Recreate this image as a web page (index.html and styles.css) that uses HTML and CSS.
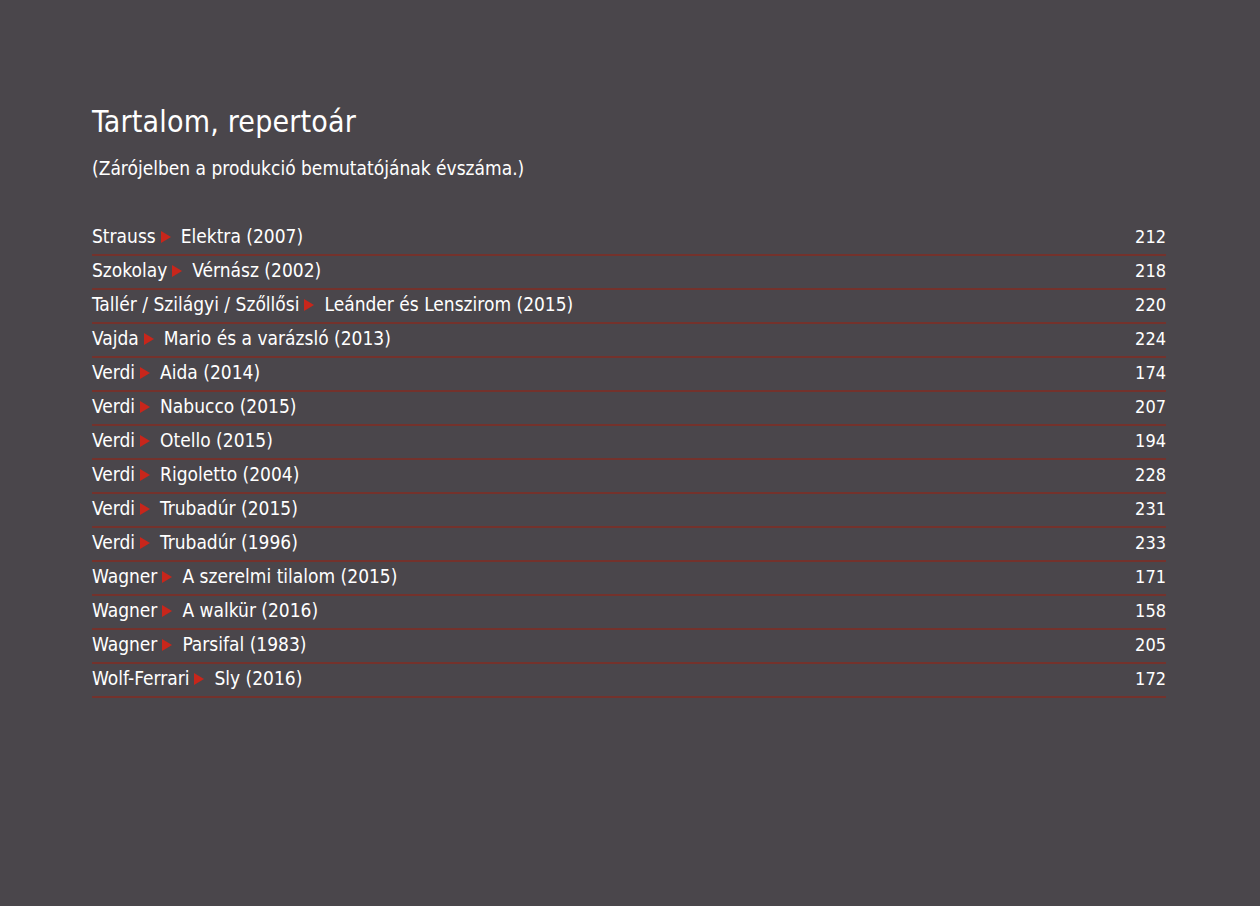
FILE: index.html
```html
<!DOCTYPE html>
<html lang="hu">
<head>
<meta charset="utf-8">
<link rel="stylesheet" href="styles.css">
</head>
<body>
<main class="page">
  <h1 class="title">Tartalom, repertoár</h1>
  <p class="subtitle">(Zárójelben a produkció bemutatójának évszáma.)</p>
  <ul class="toc">
    <li class="row"><span class="name">Strauss<span class="tri"></span>Elektra (2007)</span><span class="num">212</span></li>
    <li class="row"><span class="name">Szokolay<span class="tri"></span>Vérnász (2002)</span><span class="num">218</span></li>
    <li class="row"><span class="name">Tallér / Szilágyi / Szőllősi<span class="tri"></span>Leánder és Lenszirom (2015)</span><span class="num">220</span></li>
    <li class="row"><span class="name">Vajda<span class="tri"></span>Mario és a varázsló (2013)</span><span class="num">224</span></li>
    <li class="row"><span class="name">Verdi<span class="tri"></span>Aida (2014)</span><span class="num">174</span></li>
    <li class="row"><span class="name">Verdi<span class="tri"></span>Nabucco (2015)</span><span class="num">207</span></li>
    <li class="row"><span class="name">Verdi<span class="tri"></span>Otello (2015)</span><span class="num">194</span></li>
    <li class="row"><span class="name">Verdi<span class="tri"></span>Rigoletto (2004)</span><span class="num">228</span></li>
    <li class="row"><span class="name">Verdi<span class="tri"></span>Trubadúr (2015)</span><span class="num">231</span></li>
    <li class="row"><span class="name">Verdi<span class="tri"></span>Trubadúr (1996)</span><span class="num">233</span></li>
    <li class="row"><span class="name">Wagner<span class="tri"></span>A szerelmi tilalom (2015)</span><span class="num">171</span></li>
    <li class="row"><span class="name">Wagner<span class="tri"></span>A walkür (2016)</span><span class="num">158</span></li>
    <li class="row"><span class="name">Wagner<span class="tri"></span>Parsifal (1983)</span><span class="num">205</span></li>
    <li class="row"><span class="name">Wolf-Ferrari<span class="tri"></span>Sly (2016)</span><span class="num">172</span></li>
  </ul>
</main>
</body>
</html>
```
FILE: styles.css
```css
html, body {
  margin: 0;
  padding: 0;
  background: #4a464b;
}
body {
  width: 1260px;
  height: 906px;
  font-family: "DejaVu Sans Condensed", "Liberation Sans", sans-serif;
  color: #ffffff;
}
.page {
  padding: 102px 94px 0 92px;
}
.title {
  margin: 0;
  font-weight: normal;
  font-size: 30px;
  line-height: 40px;
  letter-spacing: 0.2px;
}
.subtitle {
  margin: 13px 0 0;
  font-size: 19px;
  line-height: 26px;
}
.toc {
  list-style: none;
  margin: 41px 0 0;
  padding: 0;
}
.row {
  display: flex;
  justify-content: space-between;
  align-items: flex-start;
  box-sizing: border-box;
  height: 34px;
  padding-top: 3px;
  border-bottom: 2px solid #74322c;
  font-size: 19px;
  line-height: 23px;
}
.name {
  display: flex;
  align-items: center;
  white-space: pre;
}
.tri {
  width: 0;
  height: 0;
  border-top: 6px solid transparent;
  border-bottom: 6px solid transparent;
  border-left: 10px solid #c8261b;
  margin: 0 10px 0 5px;
}
.num {
  font-size: 18px;
}
```
